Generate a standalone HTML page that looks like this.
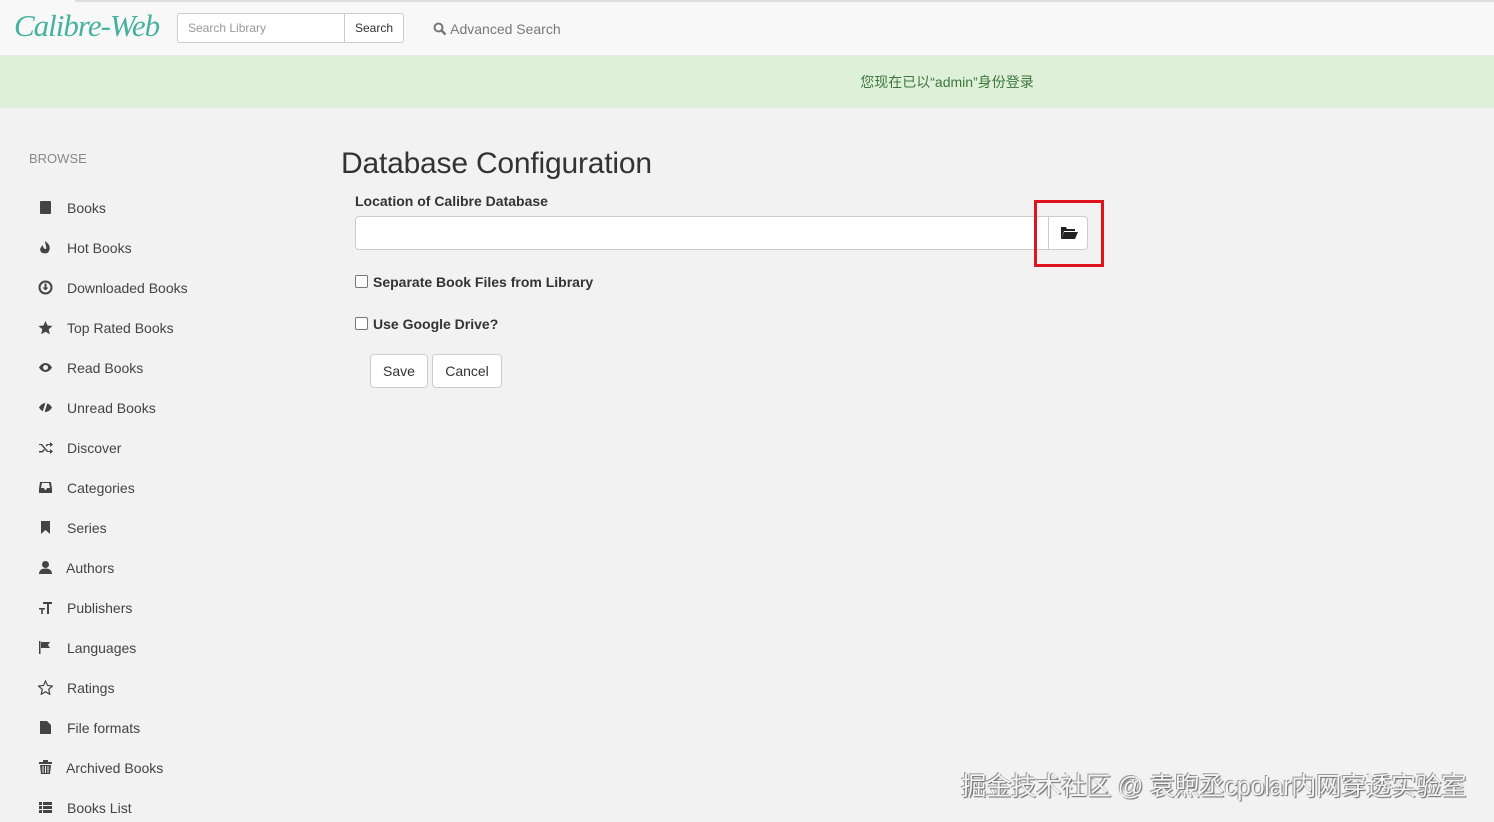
<!DOCTYPE html>
<html><head><meta charset="utf-8">
<style>
*{box-sizing:border-box;margin:0;padding:0}
html,body{width:1494px;height:822px;overflow:hidden}
body{background:#f2f2f2;font-family:"Liberation Sans","Noto Sans CJK SC",sans-serif;color:#333;position:relative}
.top{position:absolute;left:0;top:0;width:1494px;height:56px;background:#f8f8f8;border-bottom:1px solid #e7e7e7}
.topline{position:absolute;left:75px;top:0;width:1419px;height:2px;background:#ddd}
.logo{position:absolute;left:14px;top:8px;font-family:"Liberation Serif",serif;font-style:italic;font-size:31px;color:#45b29d;letter-spacing:-1px}
.search{position:absolute;left:177px;top:13px;width:168px;height:30px;border:1px solid #ccc;border-right:none;background:#fff;border-radius:3px 0 0 3px;font-size:12px;color:#999;padding:7px 10px}
.sbtn{position:absolute;left:344px;top:13px;width:60px;height:30px;border:1px solid #ccc;background:#fff;border-radius:0 3px 3px 0;font-size:12px;color:#333;padding:7px 10px}
.adv{position:absolute;left:433px;top:21px;font-size:14px;color:#777}
.alert{position:absolute;left:0;top:56px;width:1494px;height:52px;background:#dff0d8;color:#3c763d;font-size:14px;text-align:center;padding-top:16px;padding-left:400px}
.browse{position:absolute;left:29px;top:151px;font-size:13px;color:#888}
.nav{position:absolute;left:38px;top:199px}
.nav div{height:40px;font-size:14px;color:#444;position:relative;padding-left:29px;line-height:18px}
.nav svg{position:absolute;left:0;top:1px;width:15px;height:15px;fill:#444}
h1{position:absolute;left:341px;top:147px;font-size:30px;font-weight:normal;color:#333;letter-spacing:-0.2px}
.lbl{position:absolute;left:355px;top:193px;font-size:14px;font-weight:bold;color:#333}
.inp{position:absolute;left:355px;top:216px;width:694px;height:34px;background:#fff;border:1px solid #ccc;border-radius:4px 0 0 4px}
.fb{position:absolute;left:1048px;top:216px;width:40px;height:34px;background:#fff;border:1px solid #ccc;border-radius:0 4px 4px 0}
.red{position:absolute;left:1034px;top:200px;width:70px;height:67px;border:3px solid #e0141e}
.cb{position:absolute;left:355px;font-size:14px;font-weight:bold;color:#333}
.cb i{display:inline-block;width:13px;height:13px;border:1px solid #777;border-radius:2px;background:#fff;vertical-align:-1px;margin-right:5px}
.btn{position:absolute;top:354px;height:34px;background:#fff;border:1px solid #ccc;border-radius:4px;font-size:14px;color:#333;text-align:center;padding-top:8px}
.wm{position:absolute;left:961px;top:766px;font-size:25.5px;color:#f4f4f4;text-shadow:1px 1px 1px #666,-1px -1px 0 #999;letter-spacing:-0.5px;white-space:nowrap}
</style></head><body>
<div class="top"><div class="topline"></div>
<div class="logo">Calibre-Web</div>
<div class="search">Search Library</div><div class="sbtn">Search</div>
<div class="adv"><svg width="14" height="14" viewBox="0 0 14 14" style="vertical-align:-2px"><circle cx="5.5" cy="5.5" r="4" fill="none" stroke="#777" stroke-width="2"/><path d="M8.5 8.5l4 4" stroke="#777" stroke-width="2.5"/></svg> Advanced Search</div>
</div>
<div class="alert">您现在已以“admin”身份登录</div>
<div class="browse">BROWSE</div>
<div class="nav">
<div><svg viewBox="0 0 15 15"><rect x="2" y="1" width="11" height="13" rx="1"/></svg>Books</div>
<div><svg viewBox="0 0 15 15"><path d="M7 1c4 3 6 6 4 10-1 3-6 3-8 1-2-3 0-5 2-7 0 3 1 4 3 4 1-2-1-5-1-8z"/></svg>Hot Books</div>
<div><svg viewBox="0 0 15 15"><circle cx="7.5" cy="7.5" r="6" fill="none" stroke="#444" stroke-width="2"/><path d="M6.5 3.5h2v4h2l-3 3-3-3h2z"/></svg>Downloaded Books</div>
<div><svg viewBox="0 0 15 15"><path d="M7.5 1l2 4.5 5 .5-3.8 3.3 1.1 5-4.3-2.6-4.3 2.6 1.1-5L.5 6l5-.5z"/></svg>Top Rated Books</div>
<div><svg viewBox="0 0 15 15"><path d="M7.5 3C3.5 3 1 7.5 1 7.5S3.5 12 7.5 12 14 7.5 14 7.5 11.5 3 7.5 3z"/><circle cx="7.5" cy="7.5" r="2.5" fill="#f2f2f2"/></svg>Read Books</div>
<div><svg viewBox="0 0 15 15"><path d="M7.5 3C3.5 3 1 7.5 1 7.5S3.5 12 7.5 12 14 7.5 14 7.5 11.5 3 7.5 3z"/><path d="M9 1L5 14" stroke="#f2f2f2" stroke-width="2"/></svg>Unread Books</div>
<div><svg viewBox="0 0 15 15"><path d="M1 4h3l6 7h2V9l3 2.5-3 2.5v-2H9L3 5H1zM1 11h3l2-2 1 1-2.5 2.5H1zM9 4h3V2l3 2.5L12 7V5h-2L8.5 6.5l-1-1z"/></svg>Discover</div>
<div><svg viewBox="0 0 15 15"><path d="M2 2h11l1 7v4H1V9zM3 8h3l1 2h1l1-2h3l-1-5H4z"/></svg>Categories</div>
<div><svg viewBox="0 0 15 15"><path d="M3 1h9v13l-4.5-4L3 14z"/></svg>Series</div>
<div style="padding-left:28px"><svg viewBox="0 0 15 15"><circle cx="7.5" cy="4.5" r="3.5"/><path d="M1 14c0-4 3-5.5 6.5-5.5S14 10 14 14z"/></svg>Authors</div>
<div><svg viewBox="0 0 15 15"><path d="M5 2h9v2h-3v10H9V4H5zM1 8h6v1.5H4.8V14H3.2V9.5H1z"/></svg>Publishers</div>
<div><svg viewBox="0 0 15 15"><rect x="1" y="1" width="1.5" height="13"/><path d="M3 2h9l-2 3 2 3H3z"/></svg>Languages</div>
<div><svg viewBox="0 0 15 15"><path d="M7.5 1l2 4.5 5 .5-3.8 3.3 1.1 5-4.3-2.6-4.3 2.6 1.1-5L.5 6l5-.5z" fill="none" stroke="#444" stroke-width="1.2"/></svg>Ratings</div>
<div><svg viewBox="0 0 15 15"><path d="M2 1h7l4 4v9H2z"/></svg>File formats</div>
<div style="padding-left:28px"><svg viewBox="0 0 15 15"><path d="M1 2h13v2H1zM5 0h5v2H5zM2 5h11l-1 9H3z"/><path d="M5 6v7M7.5 6v7M10 6v7" stroke="#f2f2f2"/></svg>Archived Books</div>
<div><svg viewBox="0 0 15 15"><path d="M1 2h3v3H1zM5 2h9v3H5zM1 6h3v3H1zM5 6h9v3H5zM1 10h3v3H1zM5 10h9v3H5z"/></svg>Books List</div>
</div>
<h1>Database Configuration</h1>
<div class="lbl">Location of Calibre Database</div>
<div class="inp"></div>
<div class="fb"><svg width="18" height="14" viewBox="0 0 18 14" style="position:absolute;left:11px;top:9px"><path d="M1 1h5l1 2h8v2H4L1 13z" fill="#222"/><path d="M4 6h14l-3 7H1z" fill="#222"/></svg></div>
<div class="red"></div>
<div class="cb" style="top:274px"><i></i>Separate Book Files from Library</div>
<div class="cb" style="top:316px"><i></i>Use Google Drive?</div>
<div class="btn" style="left:370px;width:58px">Save</div>
<div class="btn" style="left:432px;width:70px">Cancel</div>
<div class="wm">掘金技术社区 @ 袁煦丞cpolar内网穿透实验室</div>
</body></html>
